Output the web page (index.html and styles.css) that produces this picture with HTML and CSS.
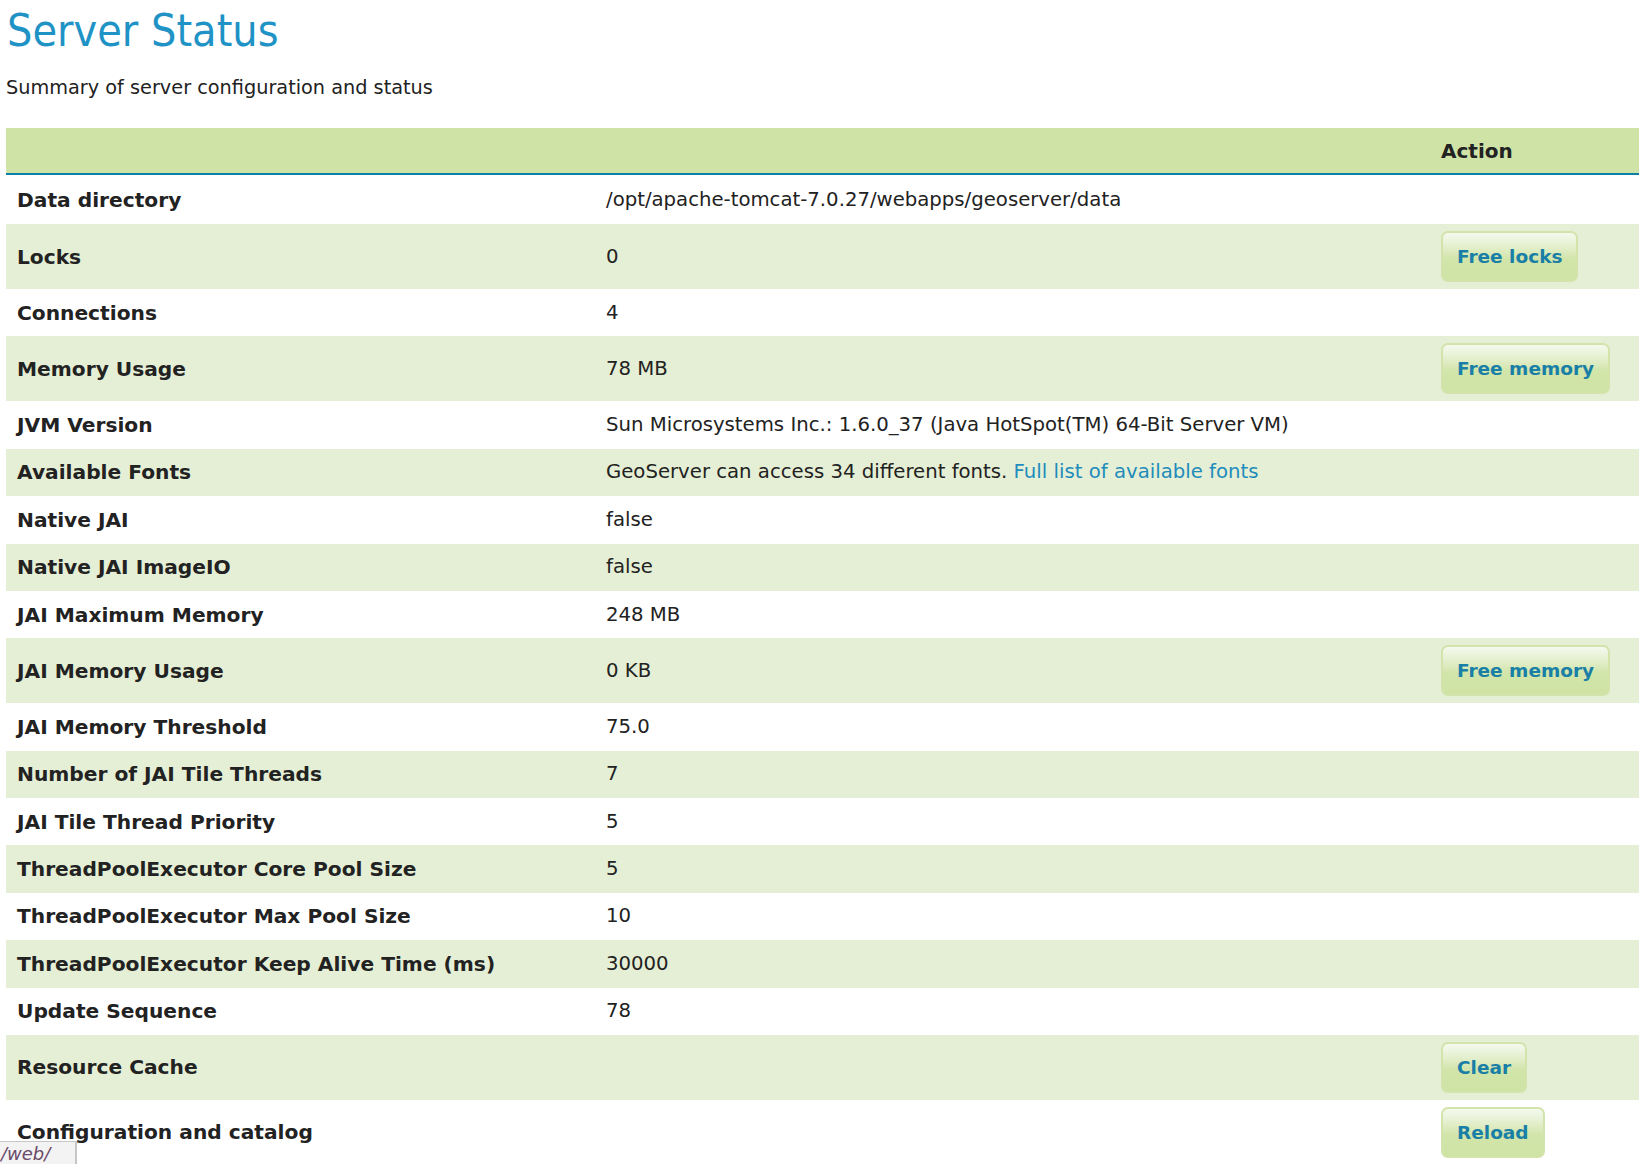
FILE: index.html
```html
<!DOCTYPE html>
<html>
<head>
<meta charset="utf-8">
<title>Server Status</title>
<link rel="stylesheet" href="styles.css">
</head>
<body>
<div class="page">
  <h1 class="page-title">Server Status</h1>
  <p class="page-desc">Summary of server configuration and status</p>
  <table class="status-table">
    <colgroup>
      <col class="col-label">
      <col class="col-value">
      <col class="col-action">
    </colgroup>
    <thead>
      <tr><th></th><th></th><th>Action</th></tr>
    </thead>
    <tbody>
      <tr class="first-row"><td class="label">Data directory</td><td>/opt/apache-tomcat-7.0.27/webapps/geoserver/data</td><td></td></tr>
      <tr class="alt btn-row"><td class="label">Locks</td><td>0</td><td><button class="act-btn">Free locks</button></td></tr>
      <tr><td class="label">Connections</td><td>4</td><td></td></tr>
      <tr class="alt btn-row"><td class="label">Memory Usage</td><td>78 MB</td><td><button class="act-btn">Free memory</button></td></tr>
      <tr><td class="label">JVM Version</td><td>Sun Microsystems Inc.: 1.6.0_37 (Java HotSpot(TM) 64-Bit Server VM)</td><td></td></tr>
      <tr class="alt"><td class="label">Available Fonts</td><td>GeoServer can access 34 different fonts. <a href="#" class="link">Full list of available fonts</a></td><td></td></tr>
      <tr><td class="label">Native JAI</td><td>false</td><td></td></tr>
      <tr class="alt"><td class="label">Native JAI ImageIO</td><td>false</td><td></td></tr>
      <tr><td class="label">JAI Maximum Memory</td><td>248 MB</td><td></td></tr>
      <tr class="alt btn-row"><td class="label">JAI Memory Usage</td><td>0 KB</td><td><button class="act-btn">Free memory</button></td></tr>
      <tr><td class="label">JAI Memory Threshold</td><td>75.0</td><td></td></tr>
      <tr class="alt"><td class="label">Number of JAI Tile Threads</td><td>7</td><td></td></tr>
      <tr><td class="label">JAI Tile Thread Priority</td><td>5</td><td></td></tr>
      <tr class="alt"><td class="label">ThreadPoolExecutor Core Pool Size</td><td>5</td><td></td></tr>
      <tr><td class="label">ThreadPoolExecutor Max Pool Size</td><td>10</td><td></td></tr>
      <tr class="alt"><td class="label">ThreadPoolExecutor Keep Alive Time (ms)</td><td>30000</td><td></td></tr>
      <tr><td class="label">Update Sequence</td><td>78</td><td></td></tr>
      <tr class="alt btn-row"><td class="label">Resource Cache</td><td></td><td><button class="act-btn">Clear</button></td></tr>
      <tr class="btn-row"><td class="label">Configuration and catalog</td><td></td><td><button class="act-btn">Reload</button></td></tr>
    </tbody>
  </table>
</div>
<div class="status-bubble">/web/</div>
</body>
</html>
```
FILE: styles.css
```css
html, body {
  margin: 0;
  padding: 0;
  background: #ffffff;
  overflow: hidden;
}
body {
  font-family: "DejaVu Sans", Verdana, sans-serif;
  font-size: 20px;
  color: #222222;
}
.page {
  padding-left: 6px;
}
.page-title {
  margin: 5px 0 0 1px;
  font-family: "DejaVu Sans Condensed", "DejaVu Sans", sans-serif;
  font-weight: normal;
  font-size: 44.5px;
  line-height: 52px;
  color: #1f93c6;
}
.page-desc {
  margin: 19px 0 0 0;
  font-size: 19.3px;
  line-height: 24px;
  color: #222222;
}
.status-table {
  margin-top: 28px;
  width: 100%;
  border-collapse: collapse;
  table-layout: fixed;
}
.col-label { width: 590px; }
.col-value { width: 835px; }
.status-table th {
  height: 45px;
  padding: 0 10px;
  background: #cfe3a6;
  border-bottom: 2px solid #0b80a6;
  text-align: left;
  font-weight: bold;
  font-size: 20px;
  vertical-align: middle;
}
.status-table th:first-child,
.status-table td:first-child {
  padding-left: 11px;
}
.status-table td {
  padding: 11.7px 10px;
  line-height: 24px;
  font-size: 19.7px;
  vertical-align: middle;
  white-space: nowrap;
}
.status-table tr.first-row td {
  padding-top: 12.5px;
  padding-bottom: 12.5px;
}
.status-table td.label {
  font-weight: bold;
  font-size: 20.2px;
}
.status-table tr.alt td {
  background: #e5efd5;
}
.status-table tr.btn-row td {
  padding-top: 7px;
  padding-bottom: 7px;
}
.act-btn {
  display: inline-block;
  height: 51px;
  padding: 0 14px 0 14px;
  border: 2px solid #d2e4ab;
  border-radius: 7px;
  background: linear-gradient(to bottom, #f5f9ee 0%, #e6f0d2 25%, #d2e5aa 55%, #cfe3a5 100%);
  font-family: "DejaVu Sans", Verdana, sans-serif;
  font-weight: bold;
  font-size: 18.5px;
  color: #1a7fa6;
  cursor: pointer;
  vertical-align: middle;
}
.link {
  color: #1f8cbc;
  text-decoration: none;
}
.status-bubble {
  position: fixed;
  left: 0;
  bottom: 0;
  width: 77px;
  height: 23px;
  box-sizing: border-box;
  padding-left: 1px;
  background: #f3f3f3;
  border-top: 1px solid #c6c6c6;
  border-right: 2px solid #c6c6c6;
  font-size: 18px;
  line-height: 24px;
  color: #6a4a6a;
  font-style: italic;
  overflow: hidden;
  white-space: nowrap;
}
```
